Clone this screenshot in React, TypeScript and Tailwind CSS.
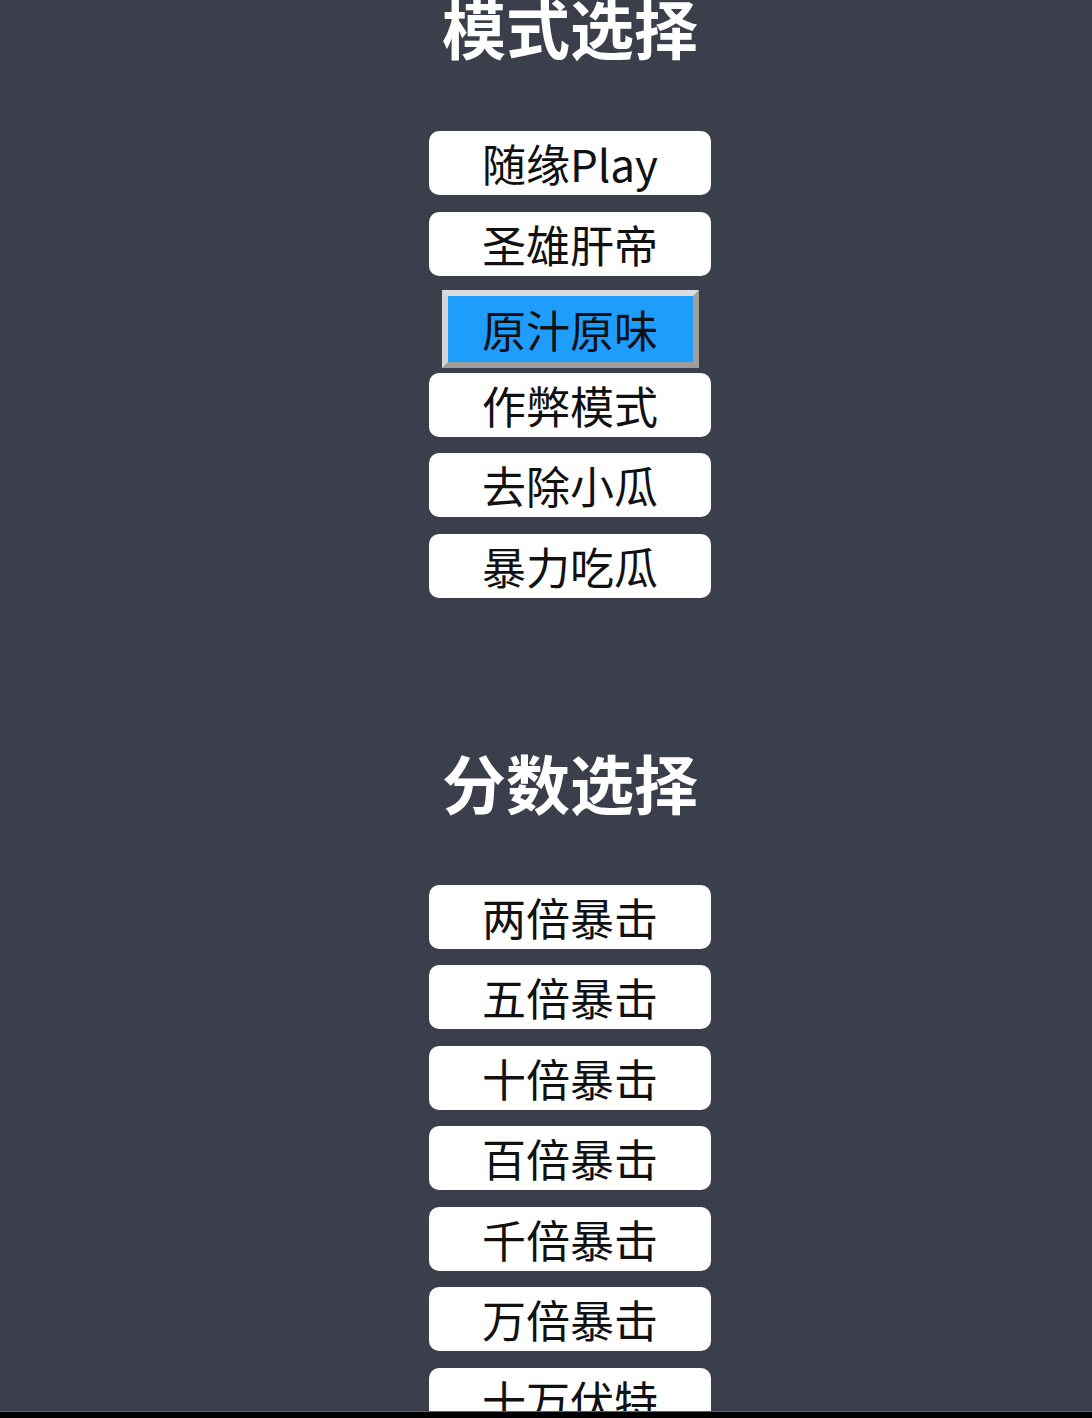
import { useState } from "react";

const modes = ["随缘Play", "圣雄肝帝", "原汁原味", "作弊模式", "去除小瓜", "暴力吃瓜"];
const scores = ["两倍暴击", "五倍暴击", "十倍暴击", "百倍暴击", "千倍暴击", "万倍暴击", "十万伏特"];

const font = { fontFamily: '"Noto Sans CJK SC", "Noto Sans", sans-serif' };

function Option({ label, active, onClick }: { label: string; active: boolean; onClick: () => void }) {
  if (active) {
    // selected option: native-looking outset bevel
    return (
      <button
        onClick={onClick}
        className="mt-[-2.5px] mb-[5px] flex h-[78px] w-[257px] items-center justify-center border-[6px] border-t-[#dcdcdc] border-l-[#d4d4d4] border-b-[#9c9c9c] border-r-[#a0a0a0] bg-[#1e9dfd] text-[44px] leading-none text-[#111]"
      >
        {label}
      </button>
    );
  }
  return (
    <button
      onClick={onClick}
      className="mb-[16.5px] flex h-[64px] w-[282px] shrink-0 items-center justify-center rounded-[10px] bg-white text-[44px] leading-none text-[#111]"
    >
      {label}
    </button>
  );
}

export default function App() {
  const [mode, setMode] = useState("原汁原味");
  const [score, setScore] = useState("");

  return (
    <div className="flex h-[1418px] w-full flex-col overflow-hidden bg-[#3b3e4b]" style={font}>
      <div className="flex h-[1411px] flex-col items-center overflow-hidden pl-[48px]">
        <h1 className="mt-[-6px] h-[64px] shrink-0 text-[64px] font-bold leading-[64px] text-white">模式选择</h1>
        <div className="mt-[73px] flex flex-col items-center">
          {modes.map((m) => (
            <Option key={m} label={m} active={mode === m} onClick={() => setMode(m)} />
          ))}
        </div>
        <h1 className="mt-[134.5px] h-[64px] shrink-0 text-[64px] font-bold leading-[64px] text-white">分数选择</h1>
        <div className="mt-[72px] flex flex-col items-center">
          {scores.map((s) => (
            <Option key={s} label={s} active={score === s} onClick={() => setScore(s)} />
          ))}
        </div>
      </div>
      <div className="h-[1px] shrink-0 bg-[#5a6170]" />
      <div className="flex-1 bg-black" />
    </div>
  );
}
